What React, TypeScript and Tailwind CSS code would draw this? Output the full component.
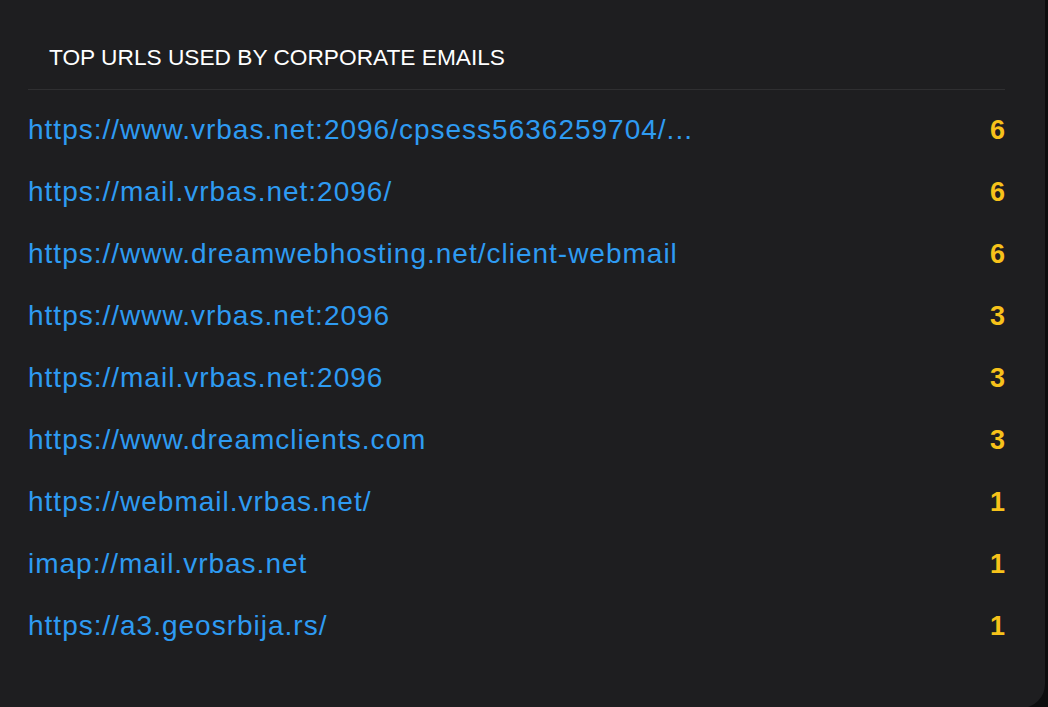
const rows: { url: string; count: number }[] = [
  { url: 'https://www.vrbas.net:2096/cpsess5636259704/...', count: 6 },
  { url: 'https://mail.vrbas.net:2096/', count: 6 },
  { url: 'https://www.dreamwebhosting.net/client-webmail', count: 6 },
  { url: 'https://www.vrbas.net:2096', count: 3 },
  { url: 'https://mail.vrbas.net:2096', count: 3 },
  { url: 'https://www.dreamclients.com', count: 3 },
  { url: 'https://webmail.vrbas.net/', count: 1 },
  { url: 'imap://mail.vrbas.net', count: 1 },
  { url: 'https://a3.geosrbija.rs/', count: 1 },
]

export default function App() {
  return (
    <div className="h-[707px] w-[1048px] overflow-hidden bg-[#0d0d0e]">
      <div
        className="h-[708px] w-[1045px] rounded-br-[24px] bg-[#1e1e20] pl-[28px] pr-[40px]"
        style={{ fontFamily: '"Liberation Sans", Arial, sans-serif' }}
      >
        <div className="flex h-[90px] items-end border-b border-[#2f2f31] pb-[20px] pl-[21px]">
          <h2 className="text-[22.7px] leading-none text-white">
            TOP URLS USED BY CORPORATE EMAILS
          </h2>
        </div>
        <ul className="pt-[9px]">
          {rows.map((r) => (
            <li
              key={r.url}
              className="flex h-[62px] items-center justify-between"
            >
              <a className="text-[28px] tracking-[1px] text-[#2e9bf2]">
                {r.url}
              </a>
              <span className="text-[27px] font-bold text-[#f7c21a]">
                {r.count}
              </span>
            </li>
          ))}
        </ul>
      </div>
    </div>
  )
}
